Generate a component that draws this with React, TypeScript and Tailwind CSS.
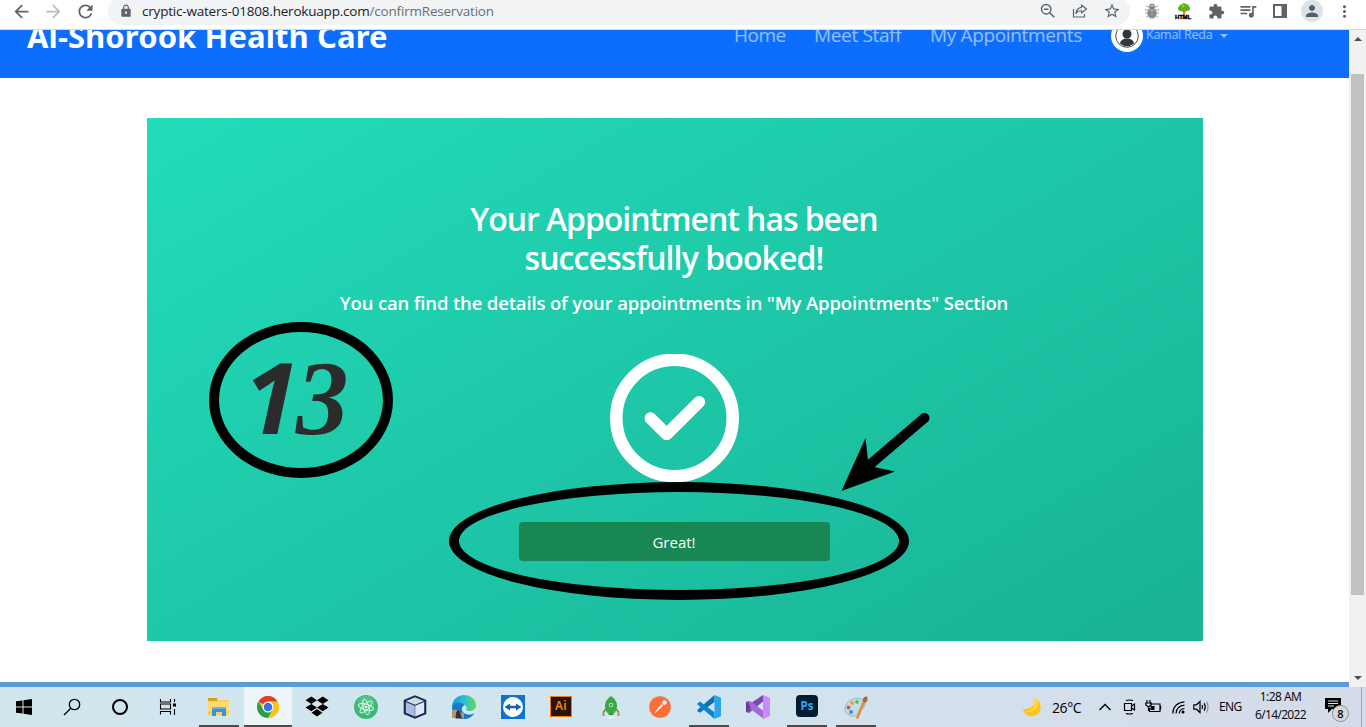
import React from 'react';
import {
  MdArrowBack,
  MdArrowForward,
  MdRefresh,
  MdLock,
  MdStarBorder,
  MdExtension,
  MdQueueMusic,
  MdPerson,
  MdMoreVert,
} from 'react-icons/md';

function Slot({ children }: { children: React.ReactNode }) {
  return <div className="flex h-7 w-8 shrink-0 items-center justify-center text-[#5f6368]">{children}</div>;
}

function BugIcon() {
  return (
    <svg width="16" height="16" viewBox="0 0 16 16" fill="none">
      <path d="M2 2.500l3 2M14 2.500l-3 2M1 6.500l3.500 1M15 6.500l-3.500 1M1 10h14M2 14.500l3-2.500M14 14.500l-3-2.500" stroke="#9a9a9a" strokeWidth="1" />
      <circle cx="8" cy="3.500" r="3" fill="#8d8d8d" />
      <ellipse cx="8" cy="10" rx="4.600" ry="5.500" fill="#868686" />
      <path d="M4.500 7.500q3.500-1.500 7 0M8 7v8" stroke="#b5b5b5" strokeWidth="0.800" />
      <path d="M6.500 2.500h3" stroke="#d0d0d0" />
    </svg>
  );
}

function TreeIcon() {
  return (
    <div className="relative h-4 w-4">
      <svg width="16" height="16" viewBox="0 0 16 16">
        <path d="M8 6v7M8 9l3-3M8 9L5 6" stroke="#e07b1a" strokeWidth="1.800" />
        <path d="M4 8a2.500 2.500 0 0 1-1-4.500C3 2 5 2 5.500 1.200 6.500 0 9.500 0 10.500 1.200c2 0 2.500 1.300 2.500 2.300 2 1.500 1 4.500-1.500 4.300C10 9 9.500 7 8 6.500 7 8 5.500 8.500 4 8z" fill="#56b51c" />
        <circle cx="7" cy="3" r="1.500" fill="#7ed63a" />
      </svg>
      <span className="absolute -bottom-px -left-[1px] font-['Liberation_Sans'] text-[6px] leading-[6px] font-black tracking-[-0.2px] text-black [-webkit-text-stroke:0.4px_black]">HTML</span>
    </div>
  );
}

function BrowserBar() {
  return (
    <header className="flex h-[30px] shrink-0 items-start overflow-hidden border-b border-[#d5d8dc] bg-white pl-[5px]">
      <div className="-mt-[3px] flex w-full items-center">
        <Slot><MdArrowBack size={21} /></Slot>
        <Slot><MdArrowForward size={21} className="text-[#b9bbbe]" /></Slot>
        <Slot><MdRefresh size={21} /></Slot>
        <div className="ml-[7px] flex h-7 w-[1022px] items-center rounded-full bg-[#f1f3f4] pr-0.5 pl-[11px]">
          <MdLock size={14} className="text-[#5f6368]" />
          <div className="ml-[9px] flex-1 pt-px font-['Open_Sans',sans-serif] text-[13.500px] tracking-[-0.2px] whitespace-nowrap text-[#202124]">
            cryptic-waters-01808.herokuapp.com<span className="text-[#6b6f74]">/confirmReservation</span>
          </div>
          <Slot>
            <svg width="16" height="16" viewBox="0 0 16 16" fill="none" stroke="currentColor" strokeWidth="1.500">
              <circle cx="6.200" cy="6.200" r="4.700" />
              <path d="M9.700 9.700l4.500 4.500M4 6.200h4.400" />
            </svg>
          </Slot>
          <Slot>
            <svg width="16" height="16" viewBox="0 0 16 16" fill="none" stroke="currentColor" strokeWidth="1.200">
              <path d="M1.500 6v8h11v-3" />
              <path d="M9.500 2l5 4-5 4V7.800C7 7.600 5.200 8.500 4 10.500c.3-3.500 2-5.800 5.500-6.200z" strokeLinejoin="round" />
            </svg>
          </Slot>
          <Slot><MdStarBorder size={18} /></Slot>
        </div>
        <div className="ml-1.5 flex">
          <Slot><BugIcon /></Slot>
          <Slot><TreeIcon /></Slot>
          <Slot><MdExtension size={17} /></Slot>
          <Slot><MdQueueMusic size={20} /></Slot>
          <Slot>
            <svg width="14" height="14" viewBox="0 0 14 14">
              <path d="M1 1h12v12H1z" fill="none" stroke="currentColor" strokeWidth="2" />
              <path d="M8.500 1H13v12H8.500z" fill="currentColor" />
            </svg>
          </Slot>
          <Slot>
            <div className="flex h-[22px] w-[22px] items-center justify-center rounded-full bg-[#dee1e6]">
              <MdPerson size={18} className="text-[#525f73]" />
            </div>
          </Slot>
          <Slot><MdMoreVert size={19} /></Slot>
        </div>
      </div>
    </header>
  );
}

function NavBar() {
  return (
    <nav className="flex h-12 shrink-0 overflow-hidden bg-[#0d6efd] pl-[27px] font-['Open_Sans',sans-serif] whitespace-nowrap text-white/55">
      <div className="-mt-[14px] w-[707px] font-['Noto_Sans'] text-[31px] leading-[40px] font-bold tracking-[0.1px] text-white">Al-Shorook Health Care</div>
      <div className="-mt-2 w-20 text-[19px] leading-[26px] tracking-[-0.5px]">Home</div>
      <div className="-mt-2 w-[116px] text-[19px] leading-[26px] tracking-[-0.35px]">Meet Staff</div>
      <div className="-mt-2 w-[181px] text-[19px] leading-[26px] tracking-[-0.35px]">My Appointments</div>
      <div className="-mt-[10px] h-8 w-8 shrink-0">
        <svg width="32" height="32" viewBox="0 0 32 32">
          <circle cx="16" cy="16" r="16" fill="#fff" />
          <circle cx="16" cy="16" r="11.300" fill="none" stroke="#31353d" strokeWidth="0.900" />
          <circle cx="16" cy="14" r="4.500" fill="#31353d" />
          <path d="M9 23.500c.5-3.500 3.500-5 7-5s6.500 1.500 7 5a10.500 10.500 0 0 1-14 0z" fill="#31353d" />
        </svg>
      </div>
      <div className="-mt-[5px] ml-[3px] w-[74px] text-[12.500px] leading-[20px] tracking-[-0.25px]">Kamal Reda</div>
      <div className="mt-1 h-0 w-0 border-x-4 border-t-4 border-x-transparent border-t-white/55" />
    </nav>
  );
}

function Card() {
  return (
    <main className="mt-10 ml-[147px] flex h-[523px] w-[1056px] shrink-0 flex-col items-center bg-[linear-gradient(150deg,#22dcba_0%,#19b295_100%)] pt-[81px] pr-0.5 font-['Open_Sans',sans-serif] text-white">
      <h1 className="text-center text-[32px] leading-[39px] font-semibold">
        <span className="block tracking-[-1.05px]">Your Appointment has been</span>
        <span className="block tracking-[-0.9px]">successfully booked!</span>
      </h1>
      <h2 className="mt-[14px] text-[18.500px] leading-[24px] font-semibold tracking-[-0.16px] whitespace-nowrap">
        You can find the details of your appointments in "My Appointments" Section
      </h2>
      <svg className="mt-[39px] h-[129px] w-[129px] shrink-0" viewBox="0 0 129 129" fill="none" stroke="#fff">
        <circle cx="64.500" cy="64" r="58.200" strokeWidth="12.500" />
        <path d="M40.500 64.200L56.700 80.200L89.200 48" strokeWidth="12" strokeLinecap="round" strokeLinejoin="round" />
      </svg>
      <button className="mt-[39px] flex h-[39px] w-[311px] shrink-0 items-center justify-center rounded-[4px] bg-[#198754] pt-0.5 text-[15px]">Great!</button>
    </main>
  );
}

function ScrollBar() {
  return (
    <aside className="flex w-[17px] shrink-0 flex-col items-center bg-[#f1f1f1]">
      <div className="mt-[7px] h-0 w-0 border-x-4 border-b-4 border-x-transparent border-b-[#505050]" />
      <div className="mt-[33px] h-[521px] w-[13px] bg-[#c1c1c1]" />
      <div className="mt-auto mb-[7px] h-0 w-0 border-x-4 border-t-4 border-x-transparent border-t-[#505050]" />
    </aside>
  );
}

function Annotations() {
  return (
    <>
      <div className="absolute top-[322px] left-[209px] h-[156px] w-[184px] rounded-[50%] border-[10px] border-black" />
      <div className="absolute top-[337px] left-[244px] flex items-baseline leading-[118px] font-bold text-[#2b2b2b] italic">
        <span className="w-[52px] font-['Open_Sans',sans-serif] text-[99px]">1</span>
        <span className="font-['Liberation_Serif',serif] text-[105px]">3</span>
      </div>
      <div className="absolute top-[482px] left-[449px] h-[118px] w-[460px] rounded-[50%] border-[10px] border-black" />
      <svg className="absolute top-[410px] left-[840px]" width="94" height="84" viewBox="0 0 94 84">
        <path d="M84.500 8L30 54.500" stroke="#000" strokeWidth="10" strokeLinecap="round" />
        <path d="M1.500 81L25.500 28L28 50L34 57L55 61.500z" fill="#000" />
      </svg>
    </>
  );
}

const icon = 'h-6 w-6';

const startIcons: React.ReactNode[] = [
  <svg className={icon} viewBox="0 0 24 24"><path d="M4 6.300l6.500-.9v6.100H4zM11.500 5.200L20 4v7.500h-8.500zM4 12.500h6.500v6.100L4 17.700zM11.500 12.500H20V20l-8.500-1.200z" /></svg>,
  <svg className={icon} viewBox="0 0 24 24" fill="none" stroke="#000" strokeWidth="1.300"><circle cx="14.500" cy="9.500" r="5.200" /><path d="M10.800 13.200L4 20" /></svg>,
  <svg className={icon} viewBox="0 0 24 24" fill="none" stroke="#000" strokeWidth="2"><circle cx="12" cy="12" r="7" /></svg>,
  <svg className={icon} viewBox="0 0 24 24" fill="none" stroke="#000" strokeWidth="1.100"><path d="M4.500 4v3h10V4M4.500 19.500v-3h10v3M4.500 9h10v5h-10zM18.500 4v3M18.500 14v6" /><path d="M17 8.500h3v3h-3z" fill="#000" stroke="none" /></svg>,
];

type App = { name: string; state?: 'open' | 'active'; art: React.ReactNode };

const apps: App[] = [
  {
    name: 'files', state: 'open',
    art: <svg className={icon} viewBox="0 0 24 24"><path d="M1 3h9l2 2h10v15H1z" fill="#fccf58" /><path d="M1 3h9v3H1z" fill="#dda012" /><path d="M1 7h21v9H1z" fill="#ffdb72" /><path d="M5 21v-8h14v8h-4v-4H9v4z" fill="#3a93d8" /><path d="M5 12h14v2H5z" fill="#65b4ea" /></svg>,
  },
  {
    name: 'chrome', state: 'active',
    art: <svg className={icon} viewBox="0 0 24 24"><circle cx="12" cy="12" r="11" fill="#fbc116" /><path d="M12 12L2.500 6.500A11 11 0 0 1 21.500 6.500H12z" fill="#e33b2e" /><path d="M12 12l4.800 2.800L12 23A11 11 0 0 1 2.500 6.500L7.200 14.700z" fill="#2a9d49" /><path d="M12 6.500h9.500A11 11 0 0 1 12 23l4.800-8.200z" fill="#fbc116" /><circle cx="12" cy="12" r="5.500" fill="#fff" /><circle cx="12" cy="12" r="4.300" fill="#3173e8" /></svg>,
  },
  {
    name: 'dropbox',
    art: <svg className={icon} viewBox="0 0 24 24"><path d="M6.300 1.500l5.700 3.700-5.700 3.700L.5 5.200zM17.700 1.500l5.800 3.700-5.800 3.700L12 5.200zM6.300 8.900L12 12.600l-5.700 3.700-5.800-3.700zM17.700 8.900l5.800 3.700-5.800 3.700-5.700-3.700zM12 14l5.500 3.800L12 21.500l-5.500-3.700z" /></svg>,
  },
  {
    name: 'atom',
    art: <svg className={icon} viewBox="0 0 24 24"><circle cx="12" cy="12" r="12" fill="#3cb878" /><circle cx="12" cy="9" r="8.500" fill="#63cc90" opacity=".5" /><g fill="none" stroke="#e8fff0" strokeWidth=".9"><ellipse cx="12" cy="12" rx="8" ry="2.800" transform="rotate(15 12 12)" /><ellipse cx="12" cy="12" rx="8" ry="2.800" transform="rotate(75 12 12)" /><ellipse cx="12" cy="12" rx="8" ry="2.800" transform="rotate(135 12 12)" /></g><circle cx="12" cy="12" r="1.200" fill="#fff" /></svg>,
  },
  {
    name: 'netbeans',
    art: <svg className={icon} viewBox="0 0 24 24"><path d="M12 .3l11.300 4.700v14L12 23.800.7 19V5z" fill="#1b2459" /><path d="M12 2.200l9 3.800L12 9.800 3 6z" fill="#cbe0dd" /><path d="M2.800 7l9 3.800v10.700l-9-3.800z" fill="#a9bddf" /><path d="M21.200 7l-9 3.800v10.700l9-3.800z" fill="#dce8f6" /></svg>,
  },
  {
    name: 'edge',
    art: <svg className={icon} viewBox="0 0 24 24"><defs><linearGradient id="edge"><stop offset="0" stopColor="#1797da" /><stop offset=".55" stopColor="#2fc2cf" /><stop offset="1" stopColor="#66d957" /></linearGradient></defs><path d="M0 12C0 5 5.500 0 12 0s12 4.500 12 10.500c0 4-3.500 5.500-7 5.500-2 0-3-1-2.500-2.500C16 9 5 6 0 12z" fill="url(#edge)" /><path d="M0 12c2-5 10-5.500 12.500-1.500-4 .5-4 8 3 9 3 .5 5-.3 7-1.500C20 22 16.500 24 12 24 5 24 0 19 0 12z" fill="#1a78c4" /><path d="M0 16q3-3 6 0t6 1v6H0z" fill="#b2976f" /><path d="M3.500 23.500l.5-5c.5-4 4-4 4.500 0l1.500 5z" fill="#34313d" /></svg>,
  },
  {
    name: 'teamviewer',
    art: <svg className={icon} viewBox="0 0 24 24"><path d="M0 0h24v24H0z" fill="#0c73d2" /><circle cx="12" cy="12" r="10" fill="#fff" /><path d="M3.500 12L9 8.500v2.200h6V8.500l5.500 3.500-5.500 3.500v-2.200H9v2.200z" fill="#0c62b4" /></svg>,
  },
  {
    name: 'illustrator',
    art: <div className="-mt-0.5 mr-0.5 flex h-[21px] w-[22px] items-center justify-center border-[1.500px] border-[#ef7d12] bg-[#2b1303] font-['Open_Sans'] text-[12px] leading-none font-semibold tracking-[0.3px] text-[#f98d1b]">Ai</div>,
  },
  {
    name: 'rocket',
    art: <svg className={icon} viewBox="0 0 24 24"><ellipse cx="12" cy="22.800" rx="4.500" ry=".8" fill="#f1f1f1" /><path d="M7 14l-2.500 3v4M17 14l2.500 3v4" stroke="#5b8d47" strokeWidth="1.500" fill="none" /><path d="M12 1c3.500 2.500 6.300 6 6 10.500-.2 2.700-1 4.500-2.500 6.500h-7C7 16 6.200 14.200 6 11.500 5.700 7 8.500 3.500 12 1z" fill="#39a845" /><circle cx="12" cy="10" r="2.300" fill="#a5dca5" /><circle cx="12" cy="10" r="1" fill="#247b35" /><path d="M4.500 17v3M19.500 17v3" stroke="#d28a60" strokeWidth="1.500" /><path d="M9.500 18h5v2h-5z" fill="#418849" /></svg>,
  },
  {
    name: 'postman',
    art: <svg className={icon} viewBox="0 0 24 24"><circle cx="12" cy="12" r="10.800" fill="#ff6c37" /><path d="M6 18.500l7.500-9.800 1.800 1.800-7 6.500z" fill="#fff" /><circle cx="16.500" cy="7.500" r="2.200" fill="#fff" /><path d="M10 13l4-4" stroke="#ffb89e" strokeWidth=".7" /></svg>,
  },
  {
    name: 'vscode', state: 'open',
    art: <svg className={icon} viewBox="0 0 24 24"><path d="M17.500 0v7L3 17.800.5 16.300v-1.600z" fill="#0e71b4" /><path d="M.5 8.200L3 6.500 17.500 17.200V24L.5 9.500z" fill="#0a84cc" /><path d="M17.500 0L24 2.800v18.400L17.500 24z" fill="#27a5ee" /></svg>,
  },
  {
    name: 'visualstudio',
    art: <svg className={icon} viewBox="0 0 24 24"><path d="M0 7l2.500-1L5 8l12-8v6.500L3 18l-3-1z" fill="#754bad" /><path d="M0 7v10l4-5z" fill="#5f3a96" /><path d="M2.500 6L6 7l12 9.500V24L5 14.500z" fill="#a46bd8" /><path d="M17 0l7 3v18l-7 3z" fill="#c78cf7" /></svg>,
  },
  {
    name: 'photoshop', state: 'open',
    art: <div className="-mt-0.5 flex h-[22px] w-[22px] items-center justify-center rounded-[4px] bg-[#001d33] font-['Open_Sans'] text-[11.500px] leading-none font-bold text-[#31a8ff]">Ps</div>,
  },
  {
    name: 'paint', state: 'open',
    art: <svg className={icon} viewBox="0 0 24 24"><path d="M2 10C5 4 12 2 17 4c5 2.500 5 8 1 10-3 1-4 2-4 4-1 4-7 4-10 1-3-2-4-5-2-9z" fill="#c5dceb" stroke="#7faac6" strokeWidth=".8" /><circle cx="8" cy="8" r="1.900" fill="#f09a30" /><circle cx="13" cy="6.800" r="1.900" fill="#67b53b" /><circle cx="4.500" cy="12.500" r="1.900" fill="#d95542" /><circle cx="7" cy="17" r="1.900" fill="#388fcf" /><path d="M13 23.500l7.500-18" stroke="#d69237" strokeWidth="2.600" /><path d="M19 6.500c-1-3 1-5 4-5 1 1.500 1 4-1.500 6.500z" fill="#a16c42" /></svg>,
  },
];

const stateClass = {
  open: 'absolute bottom-0 left-1 h-[2px] w-10 bg-[#4b4a4d]',
  active: 'absolute bottom-0 left-0 h-[2px] w-12 bg-[#4b4a4d]',
};

function Tray() {
  return (
    <div className="ml-auto flex h-full items-center font-['Open_Sans',sans-serif] whitespace-nowrap text-black">
      <svg width="20" height="20" viewBox="0 0 20 20"><path d="M11 1c3 4 2 11-10 11.500C3 19 10 20.500 15 17.500 20.500 14 20.500 4 11 1z" fill="#ffc21b" /><path d="M11 1c4 6 1 13-8 14 7 1 13-2 13-10 0-1-2-3-5-4z" fill="#ffdb3b" /></svg>
      <div className="ml-[10px] w-[47px] text-[14px] tracking-[-0.4px]">26°C</div>
      <svg width="12" height="8" viewBox="0 0 12 8" fill="none" stroke="#000" strokeWidth="1.400"><path d="M.5 7L6 1.500 11.500 7" /></svg>
      <svg className="ml-3" width="13" height="16" viewBox="0 0 13 16" fill="none" stroke="#000" strokeWidth="1.200"><path d="M3 1.500q3.500-1 7 0M3 14.500q3.500 1 7 0M1.500 4.500h7v7h-7zM8.500 7l3-2v6l-3-2" /></svg>
      <svg className="ml-[9px]" width="17" height="14" viewBox="0 0 17 14" fill="none" stroke="#000" strokeWidth="1.200"><path d="M5 4h10v7.500H4.500V8M2 0v3M5 0v3M.8 3h5.400v2L3.500 7 .8 5zM3.500 7v4M15.600 6v3.500" /><path d="M5.500 6h4v4h-4z" fill="#000" stroke="none" /></svg>
      <svg className="ml-[10px]" width="13" height="13" viewBox="0 0 13 13" fill="none" stroke="#000" strokeWidth="1.200"><path d="M.8 12.500Q1 2 12.500.8M4 12.500Q4.500 5 12.500 4.200M7.200 12.500q.5-4.500 5.300-5" /><circle cx="11" cy="11" r="1.500" fill="#000" stroke="none" /></svg>
      <svg className="ml-2" width="17" height="14" viewBox="0 0 17 14" fill="none" stroke="#000" strokeWidth="1.200"><path d="M.8 4.800h2.700L7 1.500v11L3.500 9.200H.8zM9 5q1 2 0 4M11.200 3.200q2 3.800 0 7.600" /><path d="M13.500 1.500q3 5.500 0 11" stroke="#8a929b" /></svg>
      <div className="ml-[9px] w-[25px] pb-px text-[12px] tracking-[-0.55px]">ENG</div>
      <div className="ml-[8px] flex w-[57px] flex-col items-center pb-0.5 text-[12px] leading-[18px]">
        <span className="tracking-[-0.55px]">1:28 AM</span>
        <span className="tracking-[-0.65px]">6/14/2022</span>
      </div>
      <div className="relative ml-[16px] h-6 w-6">
        <svg width="24" height="24" viewBox="0 0 24 24"><path d="M0 3h16v11H7l-4 4v-4H0z" /><path d="M3 6h10M3 8.500h10M3 11h6" stroke="#dce4ef" strokeWidth="1" /></svg>
        <div className="absolute top-[10px] left-[7px] flex h-[17px] w-[17px] items-center justify-center rounded-full border border-[#8d8f92] bg-[#d8d9dc] text-[11px] leading-none font-semibold">8</div>
      </div>
      <div className="ml-3 h-full w-[5px] border-l border-[#9ba6b5]" />
    </div>
  );
}

function TaskBar() {
  return (
    <footer className="flex h-10 shrink-0 bg-[linear-gradient(90deg,#d0e6ed_0%,#d1e5ee_50%,#d5deeb_75%,#d4dcea_100%)]">
      {startIcons.map((art, i) => (
        <div key={i} className="flex w-12 shrink-0 items-center justify-center">{art}</div>
      ))}
      <div className="ml-[3px] flex gap-px">
        {apps.map((a) => (
          <div key={a.name} className={a.state === 'active' ? 'relative flex w-12 items-center justify-center bg-[#edf5f9]' : 'relative flex w-12 items-center justify-center'}>
            {a.art}
            {a.state && <span className={stateClass[a.state]} />}
          </div>
        ))}
      </div>
      <Tray />
    </footer>
  );
}

export default function App() {
  return (
    <div className="relative flex h-[727px] w-[1366px] flex-col overflow-hidden bg-white">
      <BrowserBar />
      <div className="flex h-[657px] shrink-0">
        <div className="flex w-[1349px] flex-col bg-white">
          <NavBar />
          <Card />
          <div className="mt-auto h-[5px] bg-[#5b9bd9]" />
        </div>
        <ScrollBar />
      </div>
      <TaskBar />
      <Annotations />
    </div>
  );
}
